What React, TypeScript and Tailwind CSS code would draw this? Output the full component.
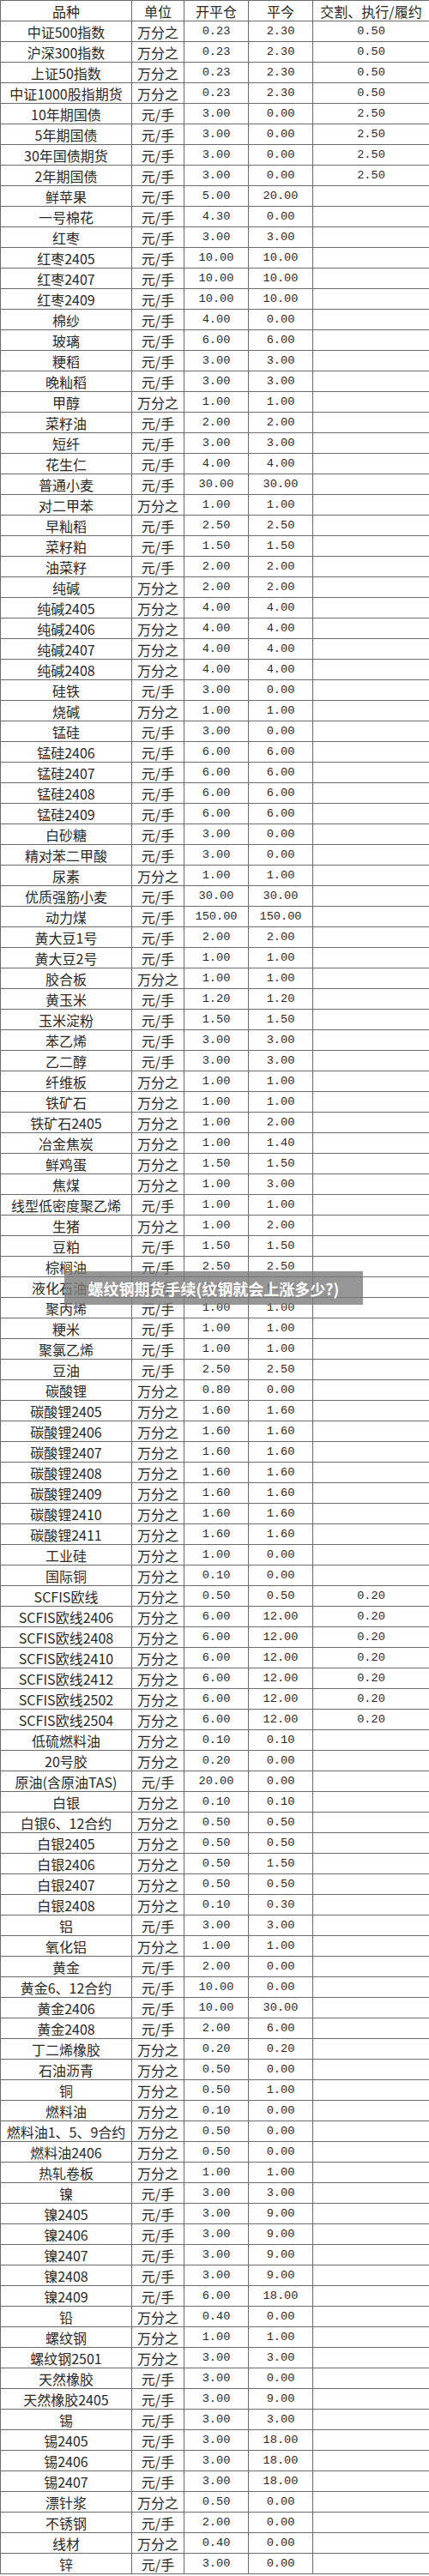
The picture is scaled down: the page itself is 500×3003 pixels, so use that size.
import React from 'react';

type Row = [string, string, string, string, string?];

const W = '万分之';
const Y = '元/手';

const ROWS: Row[] = [
  ['中证500指数', W, '0.23', '2.30', '0.50'],
  ['沪深300指数', W, '0.23', '2.30', '0.50'],
  ['上证50指数', W, '0.23', '2.30', '0.50'],
  ['中证1000股指期货', W, '0.23', '2.30', '0.50'],
  ['10年期国债', Y, '3.00', '0.00', '2.50'],
  ['5年期国债', Y, '3.00', '0.00', '2.50'],
  ['30年国债期货', Y, '3.00', '0.00', '2.50'],
  ['2年期国债', Y, '3.00', '0.00', '2.50'],
  ['鲜苹果', Y, '5.00', '20.00'],
  ['一号棉花', Y, '4.30', '0.00'],
  ['红枣', Y, '3.00', '3.00'],
  ['红枣2405', Y, '10.00', '10.00'],
  ['红枣2407', Y, '10.00', '10.00'],
  ['红枣2409', Y, '10.00', '10.00'],
  ['棉纱', Y, '4.00', '0.00'],
  ['玻璃', Y, '6.00', '6.00'],
  ['粳稻', Y, '3.00', '3.00'],
  ['晚籼稻', Y, '3.00', '3.00'],
  ['甲醇', W, '1.00', '1.00'],
  ['菜籽油', Y, '2.00', '2.00'],
  ['短纤', Y, '3.00', '3.00'],
  ['花生仁', Y, '4.00', '4.00'],
  ['普通小麦', Y, '30.00', '30.00'],
  ['对二甲苯', W, '1.00', '1.00'],
  ['早籼稻', Y, '2.50', '2.50'],
  ['菜籽粕', Y, '1.50', '1.50'],
  ['油菜籽', Y, '2.00', '2.00'],
  ['纯碱', W, '2.00', '2.00'],
  ['纯碱2405', W, '4.00', '4.00'],
  ['纯碱2406', W, '4.00', '4.00'],
  ['纯碱2407', W, '4.00', '4.00'],
  ['纯碱2408', W, '4.00', '4.00'],
  ['硅铁', Y, '3.00', '0.00'],
  ['烧碱', W, '1.00', '1.00'],
  ['锰硅', Y, '3.00', '0.00'],
  ['锰硅2406', Y, '6.00', '6.00'],
  ['锰硅2407', Y, '6.00', '6.00'],
  ['锰硅2408', Y, '6.00', '6.00'],
  ['锰硅2409', Y, '6.00', '6.00'],
  ['白砂糖', Y, '3.00', '0.00'],
  ['精对苯二甲酸', Y, '3.00', '0.00'],
  ['尿素', W, '1.00', '1.00'],
  ['优质强筋小麦', Y, '30.00', '30.00'],
  ['动力煤', Y, '150.00', '150.00'],
  ['黄大豆1号', Y, '2.00', '2.00'],
  ['黄大豆2号', Y, '1.00', '1.00'],
  ['胶合板', W, '1.00', '1.00'],
  ['黄玉米', Y, '1.20', '1.20'],
  ['玉米淀粉', Y, '1.50', '1.50'],
  ['苯乙烯', Y, '3.00', '3.00'],
  ['乙二醇', Y, '3.00', '3.00'],
  ['纤维板', W, '1.00', '1.00'],
  ['铁矿石', W, '1.00', '1.00'],
  ['铁矿石2405', W, '1.00', '2.00'],
  ['冶金焦炭', W, '1.00', '1.40'],
  ['鲜鸡蛋', W, '1.50', '1.50'],
  ['焦煤', W, '1.00', '3.00'],
  ['线型低密度聚乙烯', Y, '1.00', '1.00'],
  ['生猪', W, '1.00', '2.00'],
  ['豆粕', Y, '1.50', '1.50'],
  ['棕榈油', Y, '2.50', '2.50'],
  ['液化石油气', Y, '6.00', '6.00'],
  ['聚丙烯', Y, '1.00', '1.00'],
  ['粳米', Y, '1.00', '1.00'],
  ['聚氯乙烯', Y, '1.00', '1.00'],
  ['豆油', Y, '2.50', '2.50'],
  ['碳酸锂', W, '0.80', '0.00'],
  ['碳酸锂2405', W, '1.60', '1.60'],
  ['碳酸锂2406', W, '1.60', '1.60'],
  ['碳酸锂2407', W, '1.60', '1.60'],
  ['碳酸锂2408', W, '1.60', '1.60'],
  ['碳酸锂2409', W, '1.60', '1.60'],
  ['碳酸锂2410', W, '1.60', '1.60'],
  ['碳酸锂2411', W, '1.60', '1.60'],
  ['工业硅', W, '1.00', '0.00'],
  ['国际铜', W, '0.10', '0.00'],
  ['SCFIS欧线', W, '0.50', '0.50', '0.20'],
  ['SCFIS欧线2406', W, '6.00', '12.00', '0.20'],
  ['SCFIS欧线2408', W, '6.00', '12.00', '0.20'],
  ['SCFIS欧线2410', W, '6.00', '12.00', '0.20'],
  ['SCFIS欧线2412', W, '6.00', '12.00', '0.20'],
  ['SCFIS欧线2502', W, '6.00', '12.00', '0.20'],
  ['SCFIS欧线2504', W, '6.00', '12.00', '0.20'],
  ['低硫燃料油', W, '0.10', '0.10'],
  ['20号胶', W, '0.20', '0.00'],
  ['原油(含原油TAS)', Y, '20.00', '0.00'],
  ['白银', W, '0.10', '0.10'],
  ['白银6、12合约', W, '0.50', '0.50'],
  ['白银2405', W, '0.50', '0.50'],
  ['白银2406', W, '0.50', '1.50'],
  ['白银2407', W, '0.50', '0.50'],
  ['白银2408', W, '0.10', '0.30'],
  ['铝', Y, '3.00', '3.00'],
  ['氧化铝', W, '1.00', '1.00'],
  ['黄金', Y, '2.00', '0.00'],
  ['黄金6、12合约', Y, '10.00', '0.00'],
  ['黄金2406', Y, '10.00', '30.00'],
  ['黄金2408', Y, '2.00', '6.00'],
  ['丁二烯橡胶', W, '0.20', '0.20'],
  ['石油沥青', W, '0.50', '0.00'],
  ['铜', W, '0.50', '1.00'],
  ['燃料油', W, '0.10', '0.00'],
  ['燃料油1、5、9合约', W, '0.50', '0.00'],
  ['燃料油2406', W, '0.50', '0.00'],
  ['热轧卷板', W, '1.00', '1.00'],
  ['镍', Y, '3.00', '3.00'],
  ['镍2405', Y, '3.00', '9.00'],
  ['镍2406', Y, '3.00', '9.00'],
  ['镍2407', Y, '3.00', '9.00'],
  ['镍2408', Y, '3.00', '9.00'],
  ['镍2409', Y, '6.00', '18.00'],
  ['铅', W, '0.40', '0.00'],
  ['螺纹钢', W, '1.00', '1.00'],
  ['螺纹钢2501', W, '3.00', '3.00'],
  ['天然橡胶', Y, '3.00', '0.00'],
  ['天然橡胶2405', Y, '3.00', '9.00'],
  ['锡', Y, '3.00', '3.00'],
  ['锡2405', Y, '3.00', '18.00'],
  ['锡2406', Y, '3.00', '18.00'],
  ['锡2407', Y, '3.00', '18.00'],
  ['漂针浆', W, '0.50', '0.00'],
  ['不锈钢', Y, '2.00', '0.00'],
  ['线材', W, '0.40', '0.00'],
  ['锌', Y, '3.00', '0.00'],
];

const cell = 'h-[24px] flex items-center justify-center border-r border-b border-[#6b6b6b] whitespace-nowrap overflow-hidden';
const num = "font-['Liberation_Mono',monospace] text-[13.6px]";

export default function App() {
  return (
    <div className="relative w-[500px] bg-white text-[#2a2a2a] text-[16px] leading-none font-['Noto_Sans_CJK_SC',sans-serif]">
      <div className="grid grid-cols-[153px_61px_75px_75px_136px] border-l border-t border-[#6b6b6b]">
        <div className={cell}>品种</div>
        <div className={cell}>单位</div>
        <div className={cell}>开平仓</div>
        <div className={cell}>平今</div>
        <div className={cell}>交割、执行/履约</div>
        {ROWS.map((r, i) => (
          <React.Fragment key={i}>
            <div className={cell}>{r[0]}</div>
            <div className={cell}>{r[1]}</div>
            <div className={`${cell} ${num}`}>{r[2]}</div>
            <div className={`${cell} ${num}`}>{r[3]}</div>
            <div className={`${cell} ${num}`}>{r[4] ?? ''}</div>
          </React.Fragment>
        ))}
      </div>

      {/* caption band laid over the table */}
      <div className="absolute left-[75px] top-[1482px] w-[348px] h-[39px] bg-[#7c7c7c]/80 flex items-center justify-center">
        <span className="text-white font-bold text-[18px] whitespace-nowrap">螺纹钢期货手续(纹钢就会上涨多少?)</span>
      </div>
    </div>
  );
}
